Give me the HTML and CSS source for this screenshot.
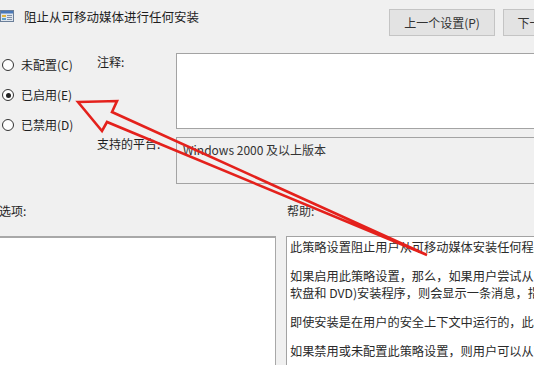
FILE: index.html
```html
<!DOCTYPE html>
<html lang="zh">
<head>
<meta charset="utf-8">
<link rel="stylesheet" href="styles.css">
</head>
<body>
<div class="page">
  <header class="head">
    <div class="title">
      <svg class="ico" width="14" height="14" viewBox="0 0 14 14">
        <rect x="0.5" y="1.5" width="13" height="11" fill="#dfe6ee" stroke="#6b7f99"/>
        <rect x="1" y="2" width="12" height="2.5" fill="#4a78b8"/>
        <rect x="2" y="6" width="4" height="2" fill="#e2b53c"/>
        <rect x="2" y="9" width="4" height="2" fill="#5da0c8"/>
        <rect x="7" y="6" width="5" height="1" fill="#8091a8"/>
        <rect x="7" y="8" width="5" height="1" fill="#8091a8"/>
        <rect x="7" y="10" width="5" height="1" fill="#8091a8"/>
      </svg>
      <span>阻止从可移动媒体进行任何安装</span>
    </div>
    <div class="navs">
      <div class="btn">上一个设置(P)</div>
      <div class="btn">下一个设置(N)</div>
    </div>
  </header>

  <section class="form">
    <div class="radios">
      <label class="radio"><span class="dot"></span>未配置(C)</label>
      <label class="radio"><span class="dot on"></span>已启用(E)</label>
      <label class="radio"><span class="dot"></span>已禁用(D)</label>
    </div>
    <div class="lab lab-note">注释:</div>
    <div class="note"></div>
    <div class="lab lab-plat">支持的平台:</div>
    <div class="plat">Windows 2000 及以上版本</div>
  </section>

  <section class="caps">
    <div class="cap cap-opt">选项:</div>
    <div class="cap cap-help">帮助:</div>
  </section>

  <section class="panes">
    <div class="opts"></div>
    <div class="help">
      <p>此策略设置阻止用户从可移动媒体安装任何程序。</p>
      <p>如果启用此策略设置，那么，如果用户尝试从可移动媒体(如 CD、<br>软盘和 DVD)安装程序，则会显示一条消息，指出无法找到该功能。</p>
      <p>即使安装是在用户的安全上下文中运行的，此策略设置也适用。</p>
      <p>如果禁用或未配置此策略设置，则用户可以从可移动媒体安装。</p>
    </div>
  </section>

  <svg class="arrow" width="534" height="365" viewBox="0 0 534 365">
    <polygon points="78,102 117,101 112,112 427,255 107,122 102,131" fill="none" stroke="#e4211c" stroke-width="2.6" stroke-linejoin="miter"/>
  </svg>
</div>
</body>
</html>
```
FILE: styles.css
```css
html, body {
  margin: 0;
  padding: 0;
  background: #f0f0f0;
}
.page {
  position: relative;
  width: 534px;
  height: 365px;
  overflow: hidden;
  font-family: "Noto Sans CJK SC", "Microsoft YaHei", sans-serif;
  font-size: 12px;
  color: #1e1e1e;
  background: #f0f0f0;
}
.head {
  display: flex;
  height: 53px;
}
.title {
  flex: 0 0 389px;
  display: flex;
  align-items: center;
  gap: 10px;
  height: 14px;
  margin-top: 9px;
  font-size: 12.5px;
}
.ico { flex: 0 0 auto; }
.navs {
  flex: 0 0 auto;
  display: flex;
  gap: 8px;
  margin-top: 9px;
}
.btn {
  width: 104px;
  height: 25px;
  border: 1px solid #c4c4c4;
  background: #e3e3e3;
  display: flex;
  align-items: center;
  justify-content: center;
  color: #333;
}
.form {
  display: grid;
  grid-template-columns: 97px 79px 362px;
  grid-template-rows: 76px 47px;
  row-gap: 8px;
}
.radios {
  grid-row: 1 / 3;
  grid-column: 1;
  display: flex;
  flex-direction: column;
  gap: 16px;
  padding-top: 5px;
}
.radio {
  display: flex;
  align-items: center;
  height: 14px;
  line-height: 14px;
  gap: 7px;
  padding-left: 2px;
}
.dot {
  width: 12px;
  height: 12px;
  border: 1px solid #333;
  border-radius: 50%;
  background: #fff;
  box-sizing: border-box;
  position: relative;
}
.dot.on::after {
  content: "";
  position: absolute;
  left: 2.5px;
  top: 2.5px;
  width: 5px;
  height: 5px;
  border-radius: 50%;
  background: #222;
}
.lab {
  grid-column: 2;
  line-height: 14px;
}
.lab-note { grid-row: 1; padding-top: 2px; }
.lab-plat { grid-row: 2; padding-top: 0px; }
.note {
  grid-row: 1;
  grid-column: 3;
  background: #fff;
  border: 1px solid #a3a3a3;
}
.plat {
  grid-row: 2;
  grid-column: 3;
  border: 1px solid #a3a3a3;
  padding: 5px 6px;
  line-height: 14px;
  color: #333;
}
.caps {
  display: flex;
  height: 52px;
  align-items: center;
}
.cap-opt { width: 288px; margin-left: -1px; }
.cap-help { color: #333; }
.panes {
  display: flex;
  height: 140px;
}
.opts {
  flex: none;
  width: 278px;
  margin-left: -3px;
  background: #fff;
  border-top: 2px solid #a8a8a8;
  border-right: 1px solid #a8a8a8;
}
.help {
  flex: none;
  margin-left: 10px;
  width: 360px;
  background: #fff;
  border: 1px solid #a3a3a3;
  padding: 2px 3px;
  line-height: 17px;
  white-space: nowrap;
  color: #2a2a2a;
  font-size: 12.2px;
}
.help p {
  margin: 0 0 12px 0;
}
.arrow {
  position: absolute;
  left: 0;
  top: 0;
  pointer-events: none;
}
```
